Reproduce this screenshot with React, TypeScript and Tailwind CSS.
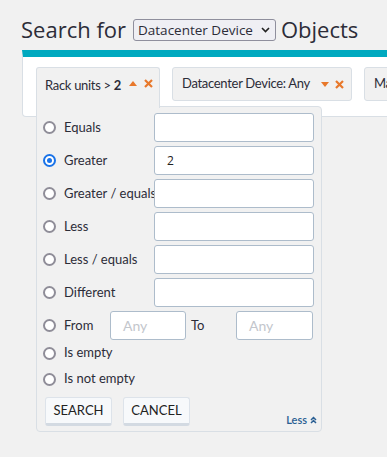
import { useState } from 'react'

const ops = ['Equals', 'Greater', 'Greater / equals', 'Less', 'Less / equals', 'Different']

function Radio({ checked }: { checked?: boolean }) {
  return (
    <span
      className={`flex h-[13px] w-[13px] shrink-0 items-center justify-center rounded-full border-2 bg-white ${
        checked ? 'border-[#1a73e8]' : 'border-[#8f8d98]'
      }`}
    >
      {checked && <span className="h-[5px] w-[5px] rounded-full bg-[#1a73e8]" />}
    </span>
  )
}

function Field({ value, placeholder, className }: { value?: string; placeholder?: string; className?: string }) {
  return (
    <div
      className={`flex h-[29px] shrink-0 items-center rounded-[3px] border border-[#adbccb] bg-white px-3 text-[14px] ${className ?? ''}`}
    >
      {value ? (
        <span className="text-[#222] text-[12px] font-['Open_Sans',sans-serif]">{value}</span>
      ) : (
        <span className="text-[#c3c6cc]">{placeholder}</span>
      )}
    </div>
  )
}

function Caret({ up }: { up?: boolean }) {
  return (
    <svg width="8" height="5" viewBox="0 0 8 5" className="shrink-0">
      <path d={up ? 'M0 5 L4 0 L8 5 Z' : 'M0 0 L8 0 L4 5 Z'} fill="#e8782b" />
    </svg>
  )
}

function Cross() {
  return (
    <svg width="9" height="9" viewBox="0 0 9 9" className="shrink-0">
      <path d="M1 1 L8 8 M8 1 L1 8" stroke="#e8782b" strokeWidth="2.2" />
    </svg>
  )
}

export default function App() {
  const [selected] = useState(1)

  return (
    <div className="min-h-[457px] w-[387px] overflow-hidden bg-[#f1f1f1] text-[#2c2c38] font-['Lato',sans-serif] text-[13px]">
      <div className="flex h-[44px] items-center gap-[5px] pl-[21px] pt-[14px] font-['Open_Sans',sans-serif]">
        <span className="text-[22px] leading-none">Search for</span>
        <div className="ml-[2px] mt-[2px] flex h-[22px] items-center gap-[8px] rounded-[3px] border border-[#8f8f9d] bg-[#efeff4] pl-[4px] pr-[5px] text-[13.5px]">
          <span>Datacenter Device</span>
          <svg width="9" height="6" viewBox="0 0 9 6">
            <path d="M1 1 L4.5 4.5 L8 1" fill="none" stroke="#222" strokeWidth="1.6" />
          </svg>
        </div>
        <span className="text-[22px] leading-none">Objects</span>
      </div>

      <div className="ml-[22px] mt-[6px] h-[67px] w-[400px] overflow-visible rounded-bl-[4px] border border-t-[7px] border-[#d9dfe5] border-t-[#00a9bf] bg-white">
        <div className="flex items-start gap-[12px] pl-[13px] pt-[10px] text-[13px] tracking-[-0.3px] whitespace-nowrap">
          <div className="relative shrink-0">
            <div className="relative z-10 flex h-[41px] w-[124px] items-start rounded-t-[3px] border border-b-0 border-[#d9dfe5] bg-[#f1f1f1] pl-[8px] pr-[6px] pt-[8px]">
              <span>
                Rack units &gt; <b>2</b>
              </span>
              <span className="ml-auto mt-[5px]"><Caret up /></span>
              <span className="ml-[7px] mt-[3px]"><Cross /></span>
            </div>

            <div className="absolute left-0 top-[39px] w-[286px] rounded-b-[4px] rounded-tr-[4px] border border-[#d9dfe5] bg-[#f1f1f1] pl-[6px] pr-[7px] pt-[6px] pb-[5px] text-[13px] tracking-normal">
              <div className="flex flex-col gap-[4px]">
                {ops.map((op, i) => (
                  <div key={op} className="flex h-[29px] items-center">
                    <Radio checked={i === selected} />
                    <span className="ml-[8px] w-[90px] shrink-0 whitespace-nowrap">{op}</span>
                    <Field value={i === selected ? '2' : ''} className="w-[160px]" />
                  </div>
                ))}
                <div className="flex h-[29px] items-center">
                  <Radio />
                  <span className="ml-[8px] w-[46px]">From</span>
                  <Field placeholder="Any" className="w-[76px]" />
                  <span className="ml-[5px] w-[45px]">To</span>
                  <Field placeholder="Any" className="w-[77px]" />
                </div>
              </div>
              <div className="flex h-[26px] items-center">
                <Radio />
                <span className="ml-[8px]">Is empty</span>
              </div>
              <div className="flex h-[26px] items-center">
                <Radio />
                <span className="ml-[8px]">Is not empty</span>
              </div>
              <div className="mt-[5px] flex items-end pl-[2px]">
                <button className="h-[29px] w-[67px] rounded-[3px] border border-b-[3px] border-[#dde3ea] border-b-[#d3dae2] bg-[#f7f9fb] text-[13px] text-[#222]">
                  SEARCH
                </button>
                <button className="ml-[11px] h-[29px] w-[67px] rounded-[3px] border border-b-[3px] border-[#dde3ea] border-b-[#d3dae2] bg-[#f7f9fb] text-[13px] text-[#222]">
                  CANCEL
                </button>
                <span className="ml-auto -mb-[2px] -mr-[3px] flex items-center gap-[3px] text-[11px] font-semibold text-[#2a5f93]">
                  Less
                  <svg width="7" height="8" viewBox="0 0 7 8">
                    <path d="M1 4 L3.5 1.5 L6 4 M1 7 L3.5 4.5 L6 7" fill="none" stroke="#2a5f93" strokeWidth="1.5" />
                  </svg>
                </span>
              </div>
            </div>
          </div>

          <div className="flex h-[34px] w-[180px] shrink-0 items-center rounded-[3px] border border-[#d9dfe5] bg-[#f1f1f1] pl-[9px] pr-[7px]">
            <span>Datacenter Device: Any</span>
            <span className="ml-auto"><Caret /></span>
            <span className="ml-[6px]"><Cross /></span>
          </div>

          <div className="flex h-[34px] w-[120px] shrink-0 items-center rounded-[3px] border border-[#d9dfe5] bg-[#f1f1f1] pl-[9px]">
            <span>Manufacturer</span>
          </div>
        </div>
      </div>
    </div>
  )
}
